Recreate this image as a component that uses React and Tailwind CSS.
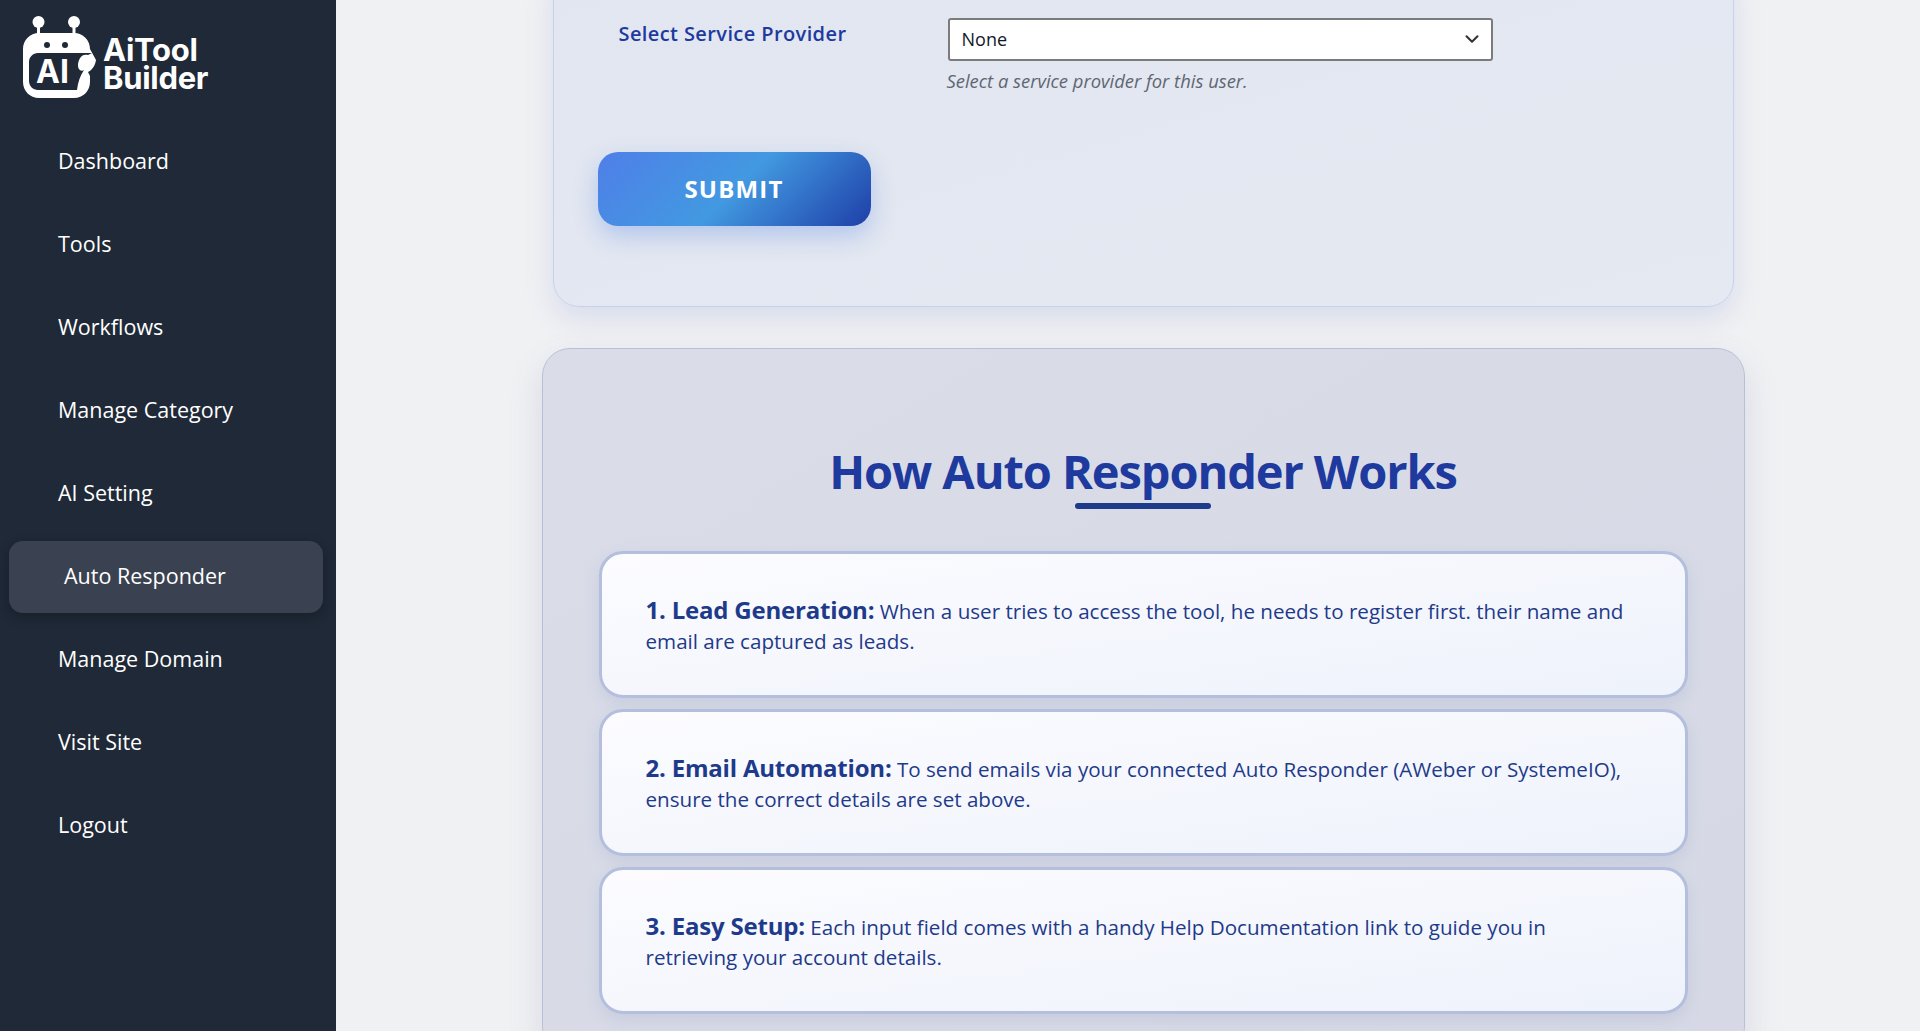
import { ChevronDown } from "lucide-react";

const navItems = ["Dashboard", "Tools", "Workflows", "Manage Category", "AI Setting", "Auto Responder", "Manage Domain", "Visit Site", "Logout"];

const steps = [
    { title: "1. Lead Generation:", text: "When a user tries to access the tool, he needs to register first. their name and email are captured as leads." },
    { title: "2. Email Automation:", text: "To send emails via your connected Auto Responder (AWeber or SystemeIO), ensure the correct details are set above." },
    { title: "3. Easy Setup:", text: "Each input field comes with a handy Help Documentation link to guide you in retrieving your account details." },
];

function Logo() {
    return (
        <div className="flex items-start h-[100px] pl-[20px] pt-[15px]">
            <svg width="78" height="85" viewBox="20 15 78 85" className="shrink-0">
                <circle cx="38.5" cy="22" r="6" fill="#fff" />
                <circle cx="74" cy="22" r="6" fill="#fff" />
                <rect x="37" y="22" width="3" height="14" fill="#fff" />
                <rect x="72.5" y="22" width="3" height="14" fill="#fff" />
                <path d="M39 33H74C83 33 90 40 90 49L96 60C95 66 92 70 88 72L90 76V82C90 91 83 98 74 98H39C30 98 23 91 23 82V49C23 40 30 33 39 33Z" fill="#fff" />
                <path d="M38 53H92L88 55C81 53 78 60 78 66C78 70 82 72 84 70C80 76 78 82 77 90H38C33 90 29 86 29 81V62C29 57 33 53 38 53Z" fill="#1f2937" />
                <circle cx="47" cy="45" r="3" fill="#1f2937" />
                <circle cx="65" cy="45" r="3" fill="#1f2937" />
                <text x="36" y="83" fill="#fff" fontFamily="Inter, sans-serif" fontWeight="700" fontSize="32">AI</text>
            </svg>
            <div className="ml-[5px] mt-[21px] font-['Inter',sans-serif] font-bold text-white text-[31px] leading-[28px] tracking-[-0.3px]">
                <div>AiTool</div>
                <div>Builder</div>
            </div>
        </div>
    );
}

function Sidebar() {
    return (
        <aside className="w-[336px] h-full shrink-0 bg-[#1f2937]">
            <Logo />
            <nav className="mt-[20px] flex flex-col pl-[9px] pr-[13px]">
                {navItems.map((item) => (
                    item === "Auto Responder" ? (
                        <a key={item} className="h-[72px] my-[5.5px] flex items-center pl-[55px] rounded-[14px] bg-[#3a4252] text-white text-[21.5px] font-medium shadow-[0_4px_12px_rgba(0,0,0,0.25)]">
                            {item}
                        </a>
                    ) : (
                        <a key={item} className="h-[83px] flex items-center pl-[49px] text-white text-[21.5px] font-medium">
                            {item}
                        </a>
                    )
                ))}
            </nav>
        </aside>
    );
}

function ProviderCard() {
    return (
        <section className="w-[1181px] h-[347px] -mt-[40px] mx-auto pt-[40px] rounded-[26px] border border-[#c5d1ee] bg-gradient-to-br from-[#e2e6f0] to-[#e4e9f2] shadow-[0_12px_28px_rgba(120,140,210,0.2)]">
            <div className="flex pl-[65px] pt-[17px]">
                <label className="w-[329px] pt-[1px] text-[#1e3a9f] text-[20px] font-semibold tracking-[0.4px] leading-[30px]">
                    Select Service Provider
                </label>
                <div>
                    <div className="relative w-[545px]">
                        <select className="w-full h-[43px] pl-[12px] bg-white border-2 border-[#7b7b7b] rounded-[3px] text-[18px] text-[#111827] appearance-none">
                            <option>None</option>
                        </select>
                        <ChevronDown className="absolute right-[10px] top-[10px] w-[22px] h-[22px] text-[#333]" strokeWidth={2.25} />
                    </div>
                    <p className="mt-[7px] -ml-[1px] text-[18.4px] leading-[25px] italic text-[#5f6672]">Select a service provider for this user.</p>
                </div>
            </div>
            <button className="mt-[59px] ml-[44px] w-[273px] h-[74px] rounded-[20px] bg-[linear-gradient(135deg,#4f7fe8_0%,#4299e1_50%,#1e3fa8_100%)] text-white text-[24px] font-bold tracking-[1.2px] shadow-[0_10px_24px_rgba(66,120,225,0.3)]">
                SUBMIT
            </button>
        </section>
    );
}

function HowItWorks() {
    return (
        <section className="w-[1203px] mt-[41px] mx-auto pt-[93px] pb-[40px] px-[56px] rounded-[28px] border border-[#b8c0d8] bg-gradient-to-br from-[#dadde8] to-[#d6d9e5] shadow-[0_14px_34px_rgba(90,100,150,0.16)]">
            <h2 className="w-fit mx-auto text-[47px] leading-[58px] font-bold text-[#1e3a9f] tracking-[-1.1px]">How Auto Responder Works</h2>
            <div className="w-[136px] h-[6px] mt-[3px] ml-[476px] rounded-full bg-[#1e3a8a]" />
            <div className="mt-[42px] flex flex-col gap-[11px]">
                {steps.map((step) => (
                    <div key={step.title} className="h-[147px] flex items-center px-[44px] pt-[2px] rounded-[24px] border-[3px] border-[#b4bedd] bg-gradient-to-br from-[#fcfcff] to-[#eef2fb] shadow-[0_6px_16px_rgba(100,110,170,0.14)]">
                        <p className="text-[20.6px] leading-[30.5px] text-[#1e3a8a]">
                            <strong className="text-[24px] font-bold tracking-[-0.2px]">{step.title}</strong> {step.text}
                        </p>
                    </div>
                ))}
            </div>
        </section>
    );
}

export default function App() {
    return (
        <div className="flex h-[1031px] overflow-hidden bg-[#f0f1f3] font-['Open_Sans','Noto_Sans',sans-serif]">
            <Sidebar />
            <main className="flex-1 min-w-0 pl-[30px]">
                <ProviderCard />
                <HowItWorks />
            </main>
        </div>
    );
}
